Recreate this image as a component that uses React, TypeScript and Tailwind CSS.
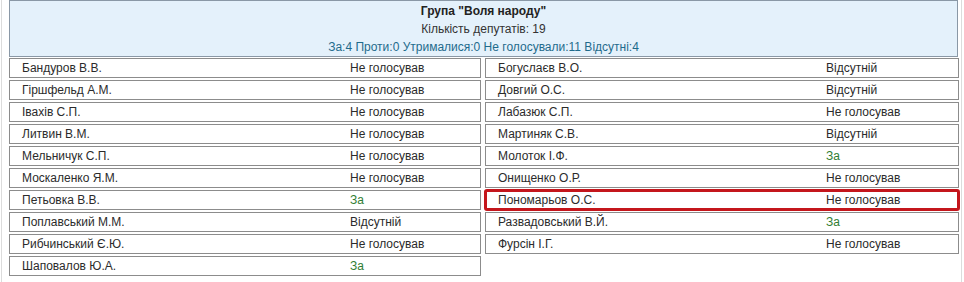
import React from "react";

type Row = { name: string; status: string };

const left: Row[] = [
  { name: "Бандуров В.В.", status: "Не голосував" },
  { name: "Гіршфельд А.М.", status: "Не голосував" },
  { name: "Івахів С.П.", status: "Не голосував" },
  { name: "Литвин В.М.", status: "Не голосував" },
  { name: "Мельничук С.П.", status: "Не голосував" },
  { name: "Москаленко Я.М.", status: "Не голосував" },
  { name: "Петьовка В.В.", status: "За" },
  { name: "Поплавський М.М.", status: "Відсутній" },
  { name: "Рибчинський Є.Ю.", status: "Не голосував" },
  { name: "Шаповалов Ю.А.", status: "За" },
];

const right: Row[] = [
  { name: "Богуслаєв В.О.", status: "Відсутній" },
  { name: "Довгий О.С.", status: "Відсутній" },
  { name: "Лабазюк С.П.", status: "Не голосував" },
  { name: "Мартиняк С.В.", status: "Відсутній" },
  { name: "Молоток І.Ф.", status: "За" },
  { name: "Онищенко О.Р.", status: "Не голосував" },
  { name: "Пономарьов О.С.", status: "Не голосував" },
  { name: "Развадовський В.Й.", status: "За" },
  { name: "Фурсін І.Г.", status: "Не голосував" },
];

function Cell({ row, highlight }: { row?: Row; highlight?: boolean }) {
  if (!row) return <div className="h-[20px]" />;
  const isYes = row.status === "За";
  return (
    <div
      className={
        "flex h-[20px] items-center border border-[#8c8c8c] bg-white " +
        (highlight ? "rounded-[2px] outline-[3px] outline-solid outline-[#c4161c] -outline-offset-2" : "")
      }
    >
      <div className="w-[340px] pl-[12px] text-[#2b2b2b]">{row.name}</div>
      <div className={isYes ? "text-[#2f7d32]" : "text-[#2b2b2b]"}>{row.status}</div>
    </div>
  );
}

export default function App() {
  const rows = Array.from({ length: 10 }, (_, i) => i);
  return (
    <div
      className="h-[282px] w-[964px] bg-white text-[12px] leading-[14px]"
      style={{ fontFamily: '"Liberation Sans", Arial, sans-serif' }}
    >
      <div className="ml-[1px] h-full w-[961px] border-l border-r border-[#dcdcdc] pl-[7px] pr-[2px]">
        <div className="h-[57px] w-[949px] border border-[#8a98a6] bg-[#e4f1fb] pt-[1px] text-center leading-[18px]">
          <div className="font-bold text-[#222]">Група "Воля народу"</div>
          <div className="text-[#333]">Кількість депутатів: 19</div>
          <div className="text-[#1f6b8c]">
            За:4 Проти:0 Утрималися:0 Не голосували:11 Відсутні:4
          </div>
        </div>
        <div className="mt-[1px] grid w-[950px] grid-cols-[472px_474px] gap-x-[4px] gap-y-[2px]">
          {rows.map((i) => (
            <React.Fragment key={i}>
              <Cell row={left[i]} />
              <Cell row={right[i]} highlight={i === 6} />
            </React.Fragment>
          ))}
        </div>
      </div>
    </div>
  );
}
